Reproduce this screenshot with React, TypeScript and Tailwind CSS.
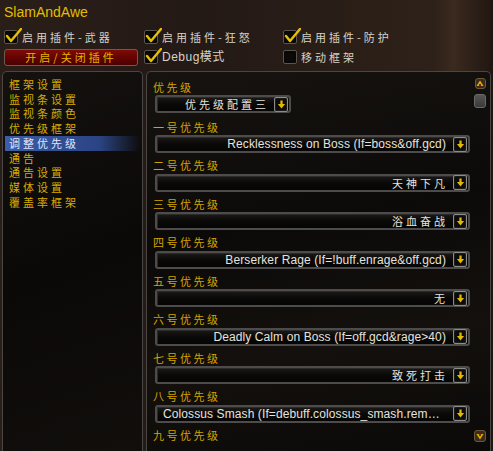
const cjk = "font-['Noto_Sans_CJK_SC',sans-serif]";

function Check({ on }: { on: boolean }) {
  return (
    <div className="relative h-[14px] w-[14px] shrink-0 rounded-[2px] border border-[#5a5550] bg-[#0c0a09] shadow-[inset_0_0_3px_#000]">
      {on && (
        <svg className="absolute -top-[3px] left-[0px] h-[16px] w-[17px]" viewBox="0 0 17 16">
          <path d="M2 8 L6 13 L16 1" fill="none" stroke="#e5c000" strokeWidth={2.4} strokeLinecap="round" strokeLinejoin="round" />
        </svg>
      )}
    </div>
  );
}

function CheckItem({ on, label }: { on: boolean; label: string }) {
  return (
    <div className="flex items-center gap-[4px]">
      <Check on={on} />
      <span className={`text-[11px] leading-[14px] tracking-[3px] text-[#d6d2c8] ${cjk}`}>{label}</span>
    </div>
  );
}

function ArrowBtn() {
  return (
    <div className="flex h-[15px] w-[14px] shrink-0 items-center justify-center rounded-[2px] border border-[#8c8c8c] bg-[#0b0b0b] shadow-[inset_0_0_2px_#444]">
      <svg className="h-[9px] w-[9px]" viewBox="0 0 8 8">
        <path d="M3 0.5 H5 V3.5 H7.2 L4 7.5 L0.8 3.5 H3 Z" fill="#e2b800" />
      </svg>
    </div>
  );
}

function Dropdown({ text, latin }: { text: string; latin?: boolean }) {
  return (
    <div className="flex h-[18px] items-center rounded-[3px] border-2 border-[#4e4c4a] bg-gradient-to-b from-[#1c1a18] via-[#0a0908] to-[#050505] pl-[6px] pr-[1px] shadow-[inset_1px_1px_0_#2a2a2a]">
      <span
        className={`min-w-0 flex-1 truncate text-right ${
          latin
            ? "font-['Liberation_Sans',sans-serif] text-[12px] pr-[7px] tracking-[0.1px]"
            : `${cjk} text-[11px] pr-[5px] tracking-[3px]`
        } leading-[14px] text-[#e6e3de]`}
      >
        {text}
      </span>
      <ArrowBtn />
    </div>
  );
}

const tree = ["框架设置", "监视条设置", "监视条颜色", "优先级框架", "调整优先级", "通告", "通告设置", "媒体设置", "覆盖率框架"];

const prios: [string, string, boolean][] = [
  ["一号优先级", "Recklessness on Boss (If=boss&off.gcd)", true],
  ["二号优先级", "天神下凡", false],
  ["三号优先级", "浴血奋战", false],
  ["四号优先级", "Berserker Rage (If=!buff.enrage&off.gcd)", true],
  ["五号优先级", "无", false],
  ["六号优先级", "Deadly Calm on Boss (If=off.gcd&rage>40)", true],
  ["七号优先级", "致死打击", false],
  ["八号优先级", "Colossus Smash (If=debuff.colossus_smash.remaining<1)", true],
];

function Label({ text }: { text: string }) {
  return (
    <div className={`flex h-[16px] items-center pl-[5px] text-[11px] leading-none tracking-[2.5px] text-[#d2a400] ${cjk}`}>
      {text}
    </div>
  );
}

export default function App() {
  return (
    <div className="flex h-[451px] w-[493px] flex-col overflow-hidden bg-[#261b16] bg-[linear-gradient(90deg,#2a1e18_0%,#231915_40%,#2e2119_88%,#3a2a1f_92%,#201611_100%)]">
      <div className="h-[26px] pl-[4px] pt-[4px] font-['Liberation_Sans',sans-serif] text-[14px] leading-[16px] text-[#e2bd00]">
        SlamAndAwe
      </div>

      <div className="grid h-[22px] grid-cols-[140px_139px_1fr] items-center pl-[4px]">
        <CheckItem on label="启用插件-武器" />
        <CheckItem on label="启用插件-狂怒" />
        <CheckItem on label="启用插件-防护" />
      </div>

      <div className="grid h-[23px] grid-cols-[140px_139px_1fr] items-start pl-[4px] pt-[1px]">
        <div className={`mr-[6px] flex h-[17px] items-center justify-center rounded-[3px] border border-[#6e5a55] bg-gradient-to-b from-[#7e0c06] via-[#640402] to-[#4c0000] text-[11px] leading-none tracking-[3px] text-[#e3b300] ${cjk}`}>
          开启/关闭插件
        </div>
        <div className="flex items-center gap-[4px] pt-[1px]">
          <Check on />
          <span className="font-['Liberation_Sans','Noto_Sans_CJK_SC',sans-serif] text-[12px] leading-[14px] tracking-[0.5px] text-[#d6d2c8]">
            Debug模式
          </span>
        </div>
        <div className="pt-[1px]">
          <CheckItem on={false} label="移动框架" />
        </div>
      </div>

      <div className="flex min-h-0 flex-1 gap-[3px] px-[2px]">
        <div className="w-[141px] shrink-0 rounded-t-[5px] border border-b-0 border-[#4a4643] bg-[#0d0b0a] bg-[linear-gradient(160deg,#14110f_0%,#0b0908_50%,#110e0c_100%)] px-[2px] pt-[5px]">
          {tree.map((t) => {
            const sel = t === "调整优先级";
            return (
              <div
                key={t}
                className={`flex h-[14.75px] items-center pl-[4px] text-[11px] leading-none tracking-[3px] ${cjk} ${
                  sel
                    ? "bg-gradient-to-r from-[#3d5da8] via-[#2a4483] via-70% to-transparent text-[#dfe6ff]"
                    : "text-[#d6ab00]"
                }`}
              >
                {t}
              </div>
            );
          })}
        </div>

        <div className="flex min-w-0 flex-1 rounded-t-[5px] border border-b-0 border-[#4a4643] bg-[#0e0c0b] bg-[linear-gradient(170deg,#161310_0%,#0c0a09_40%,#13100d_70%,#0b0908_100%)]">
          <div className="flex min-w-0 flex-1 flex-col pl-[1px] pr-[3px] pt-[7px]">
            <div className="mb-[6px]">
              <Label text="优先级" />
              <div className="ml-[7px] w-[136px]">
                <Dropdown text="优先级配置三" />
              </div>
            </div>
            {prios.map(([label, value, latin]) => (
              <div key={label} className="mb-[4.57px]">
                <Label text={label} />
                <div className="ml-[7px]">
                  <Dropdown text={value} latin={latin} />
                </div>
              </div>
            ))}
            <Label text="九号优先级" />
          </div>

          <div className="flex w-[17px] shrink-0 flex-col items-center justify-between pb-[9px] pr-[3px] pt-[6px]">
            <div className="flex flex-col items-center gap-[5px]">
              <div className="flex h-[11px] w-[11px] items-center justify-center rounded-[3px] border border-[#6a5a3a] bg-[#3a2c1c]">
                <svg className="h-[8px] w-[8px]" viewBox="0 0 8 8">
                  <path d="M4 0.5 L7.5 6 H0.5 Z" fill="#e0b400" />
                  <circle cx="4" cy="5" r="1.2" fill="#8a1a00" />
                </svg>
              </div>
              <div className="h-[14px] w-[12px] rounded-[3px] border border-[#6a6a6a] bg-gradient-to-b from-[#555] to-[#3a3a3a]" />
            </div>
            <div className="flex h-[12px] w-[12px] items-center justify-center rounded-[3px] border border-[#6a5a3a] bg-[#3a2c1c]">
              <svg className="h-[8px] w-[8px]" viewBox="0 0 8 8">
                <path d="M4 7.5 L7.5 2 H0.5 Z" fill="#e0b400" />
                <circle cx="4" cy="3" r="1.2" fill="#8a1a00" />
              </svg>
            </div>
          </div>
        </div>
      </div>
    </div>
  );
}
